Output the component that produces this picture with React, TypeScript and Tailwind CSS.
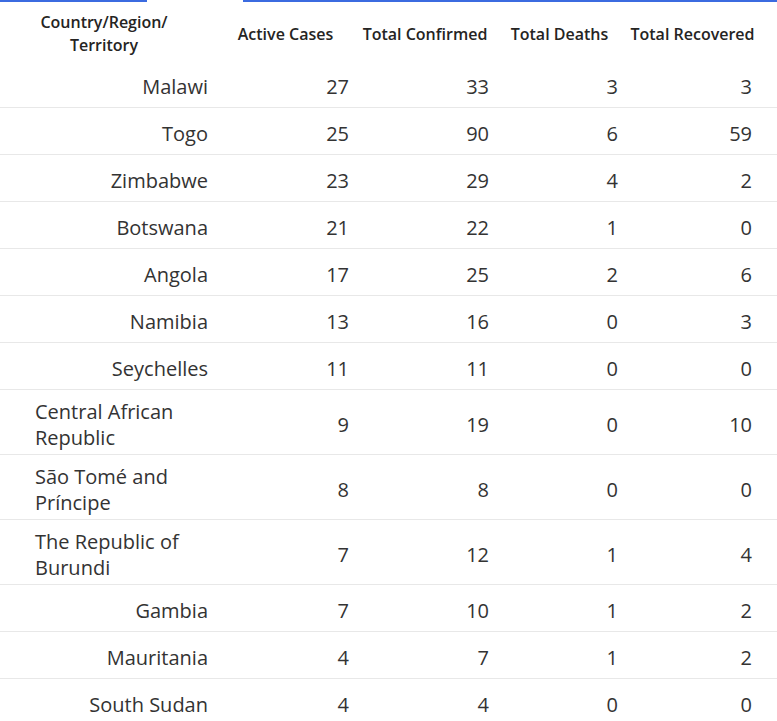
const ROWS: [string, number, number, number, number][] = [
  ["Malawi", 27, 33, 3, 3],
  ["Togo", 25, 90, 6, 59],
  ["Zimbabwe", 23, 29, 4, 2],
  ["Botswana", 21, 22, 1, 0],
  ["Angola", 17, 25, 2, 6],
  ["Namibia", 13, 16, 0, 3],
  ["Seychelles", 11, 11, 0, 0],
  ["Central African Republic", 9, 19, 0, 10],
  ["São Tomé and Príncipe", 8, 8, 0, 0],
  ["The Republic of Burundi", 7, 12, 1, 4],
  ["Gambia", 7, 10, 1, 2],
  ["Mauritania", 4, 7, 1, 2],
  ["South Sudan", 4, 4, 0, 0],
];

const HEADERS = ["Active Cases", "Total Confirmed", "Total Deaths", "Total Recovered"];

const GRID = "grid grid-cols-[216px_139px_140px_129px_137px]";

export default function App() {
  return (
    <div className="w-[777px] h-[721px] overflow-hidden bg-white font-['Open_Sans',sans-serif]">
      {/* top accent line with gap */}
      <div className="flex h-[2px]">
        <div className="w-[147px] bg-[#3b6be0]" />
        <div className="w-[96px]" />
        <div className="flex-1 bg-[#3b6be0]" />
      </div>

      {/* header */}
      <div className={`${GRID} h-[59px] items-center pt-[5px] text-[16px] leading-[23px] font-semibold text-[#252423]`}>
        <div className="pr-[8px] text-center">
          Country/Region/
          <br />
          Territory
        </div>
        {HEADERS.map((h) => (
          <div key={h} className="px-[6px] text-center whitespace-nowrap">
            {h}
          </div>
        ))}
      </div>

      {/* rows */}
      {ROWS.map(([name, active, confirmed, deaths, recovered]) => (
        <div
          key={name}
          className={`${GRID} min-h-[47px] items-center pt-[9px] pb-[3px] border-b border-[#e8e8e8] text-[20px] leading-[26px] text-[#333333]`}
        >
          <div className="flex justify-end pl-[35px] pr-[8px]">
            <span className="text-left">{name}</span>
          </div>
          <div className="px-[6px] text-right">{active}</div>
          <div className="px-[6px] text-right">{confirmed}</div>
          <div className="px-[6px] text-right">{deaths}</div>
          <div className="pl-[6px] pr-[9px] text-right">{recovered}</div>
        </div>
      ))}
    </div>
  );
}
